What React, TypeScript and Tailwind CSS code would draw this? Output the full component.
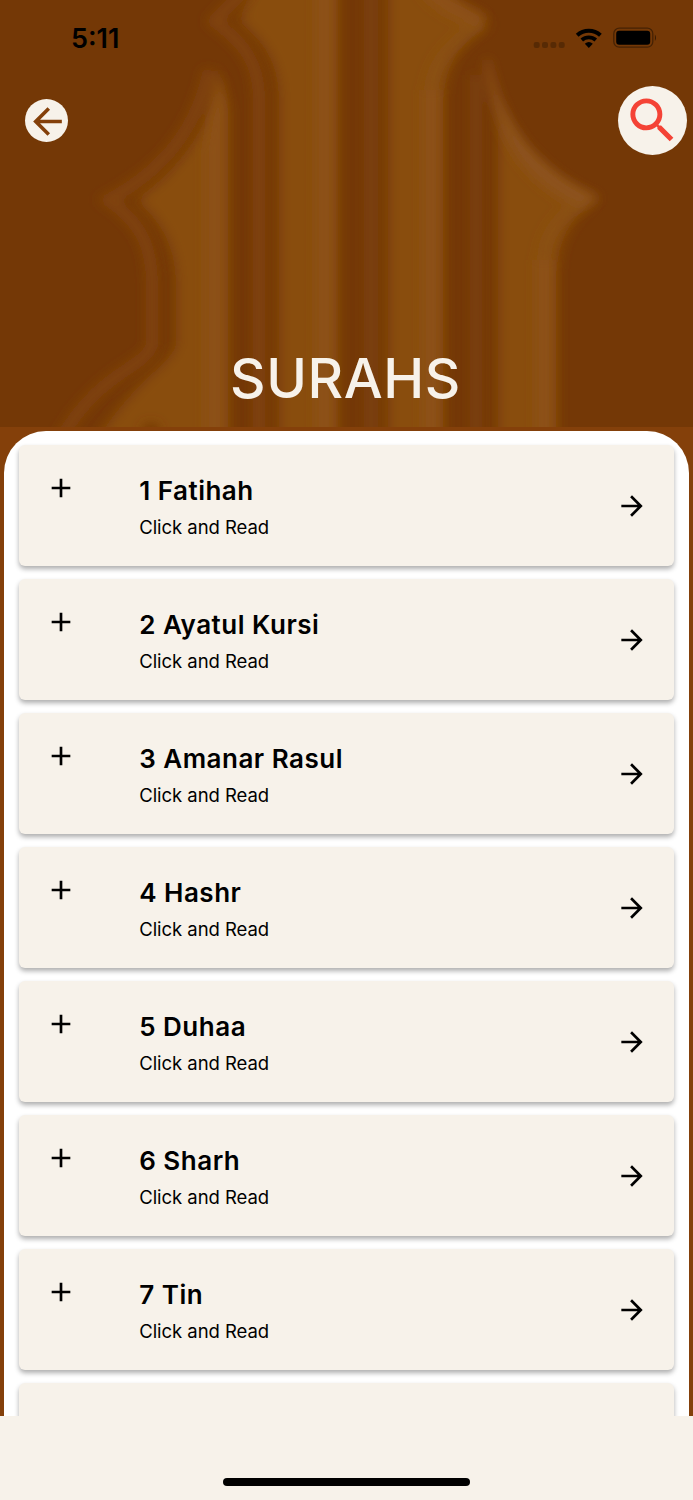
import { MdAdd, MdArrowBack, MdArrowForward, MdSearch } from "react-icons/md";

const surahs = [
  "1 Fatihah",
  "2 Ayatul Kursi",
  "3 Amanar Rasul",
  "4 Hashr",
  "5 Duhaa",
  "6 Sharh",
  "7 Tin",
];

function Backdrop() {
  return (
    <svg className="absolute inset-0" width="693" height="427" viewBox="0 0 693 427" fill="none">
      <defs>
        <filter id="soft" filterUnits="userSpaceOnUse" x="-40" y="-60" width="773" height="560">
          <feGaussianBlur stdDeviation="6.5" />
        </filter>
        <filter id="softer" filterUnits="userSpaceOnUse" x="-40" y="-60" width="773" height="560">
          <feGaussianBlur stdDeviation="5.5" />
        </filter>
      </defs>
      <g filter="url(#soft)">
        <g fill="#894d10">
          <path d="M219 74C211 124 184 165 136 200C160 220 176 245 176 285V345C170 368 120 385 76 480H228V110Z" />
          <path d="M268 -55L239 21C264 42 279 62 279 100V480H338V-55Z" />
          <path d="M388 -55H425C445 5 475 14 490 24C460 42 443 64 443 110V480H388Z" />
          <path d="M488 62C498 130 530 174 596 200C568 219 556 242 556 285V480H498V110Z" />
        </g>
      </g>
      <g filter="url(#softer)">
        <g stroke="#82450d" strokeWidth="12" strokeOpacity=".85">
          <path d="M209 70C198 122 170 167 108 200C140 222 152 245 152 285V345C143 370 100 370 60 440" />
          <path d="M250 -15L214 21C242 42 259 60 259 100V480" />
          <path d="M371 -55V480" strokeWidth="15" strokeOpacity=".5" />
          <path d="M476 75V480" strokeOpacity=".5" />
        </g>
        <path d="M218 68L205 150V480H224V100Z" fill="#8d521b" fillOpacity=".85" />
        <g stroke="#8d521b" strokeWidth="17" strokeOpacity=".8">
          <path d="M324 -55V480" />
          <path d="M431 90V480" />
          <path d="M544 260V480" />
          <path d="M425 -15C445 10 465 12 482 23" />
        </g>
        <path d="M487 60C500 125 535 170 596 198L580 206C525 180 497 140 487 60Z" fill="#8d521b" stroke="#8d521b" strokeWidth="4" />
        <path d="M480 24C455 42 433 60 431 90M584 200C558 219 544 235 544 260" stroke="#8d521b" strokeOpacity=".35" strokeWidth="14" />
        <circle cx="151" cy="432" r="9" fill="#743806" />
      </g>
    </svg>
  );
}

function StatusIcons() {
  return (
    <svg width="126" height="24" viewBox="0 0 126 24">
      <g fill="#000" opacity=".24">
        <rect x="3.7" y="16" width="6" height="6" rx="2" />
        <rect x="12" y="16" width="6" height="6" rx="2" />
        <rect x="20.4" y="16" width="6" height="6" rx="2" />
        <rect x="28.7" y="16" width="6" height="6" rx="2" />
      </g>
      <g fill="none" stroke="#000" strokeWidth="4">
        <path d="M47.2 9.3A17 17 0 0 1 70.4 9.3" />
        <path d="M51.8 14A10.5 10.5 0 0 1 65.8 14" strokeWidth="3.8" />
      </g>
      <path d="M58.8 22L54.8 17.8Q58.8 14.4 62.8 17.8Z" />
      <rect x="83.8" y="2.2" width="39" height="19" rx="5.5" fill="none" stroke="#000" strokeOpacity=".4" strokeWidth="1.3" />
      <rect x="86.2" y="4.8" width="34" height="14" rx="3" />
      <path d="M124.9 8.5Q127.2 11.7 124.9 15Z" opacity=".5" />
    </svg>
  );
}

export default function App() {
  return (
    <div className="flex h-[1500px] w-[693px] flex-col overflow-hidden bg-[#84400a] font-['Inter','Liberation_Sans',sans-serif] text-black">
      <header className="relative h-[427px] shrink-0 bg-[#743806]">
        <Backdrop />
        <div className="relative flex h-full flex-col">
          <div className="flex h-[76px] items-center justify-between pr-[37px] pl-[71px]">
            <span className="text-[27px] leading-none font-semibold">5:11</span>
            <StatusIcons />
          </div>
          <div className="mt-[10px] flex items-center justify-between pr-[6px] pl-[25.4px]">
            <button className="flex h-[43px] w-[43px] items-center justify-center rounded-full bg-[#f7f2ea] text-[#84400a]">
              <MdArrowBack className="mt-px ml-px shrink-0" size={43} />
            </button>
            <button className="flex h-[69px] w-[69px] items-center justify-center rounded-full bg-[#f7f2ea] text-[#f44336]">
              <MdSearch size={59} />
            </button>
          </div>
          <h1 className="mt-auto pr-[2px] pb-[20px] text-center text-[55px] leading-[58px] font-medium tracking-[0.6px] text-[#f7f2ea]">SURAHS</h1>
        </div>
      </header>
      <main className="mx-[4px] mt-[4px] flex h-[985px] shrink-0 flex-col gap-[13px] overflow-hidden rounded-t-[42px] bg-white px-[15px] pt-[14px]">
        {surahs.map((name) => (
          <article key={name} className="flex h-[121px] shrink-0 rounded-[6px] bg-[#f7f2ea] shadow-[0_3px_5px_rgba(0,0,0,0.32)]">
            <MdAdd className="mt-[27px] ml-[26.4px] shrink-0" size={32} />
            <div className="ml-[61.8px] flex-1 pt-[29px]">
              <h2 className="text-[26px] leading-[34px] font-semibold tracking-[0.5px]">{name}</h2>
              <p className="mt-[7px] text-[18.5px] leading-[24px] tracking-[-0.05px]">Click and Read</p>
            </div>
            <MdArrowForward className="mt-[45px] mr-[26.5px] shrink-0" size={32} />
          </article>
        ))}
        <article className="h-[121px] shrink-0 rounded-[6px] bg-[#f7f2ea] shadow-[0_3px_5px_rgba(0,0,0,0.32)]" />
      </main>
      <footer className="flex flex-1 items-end justify-center bg-[#f7f2ea] pb-[14px]">
        <div className="h-[8px] w-[247px] rounded-full bg-black" />
      </footer>
    </div>
  );
}
